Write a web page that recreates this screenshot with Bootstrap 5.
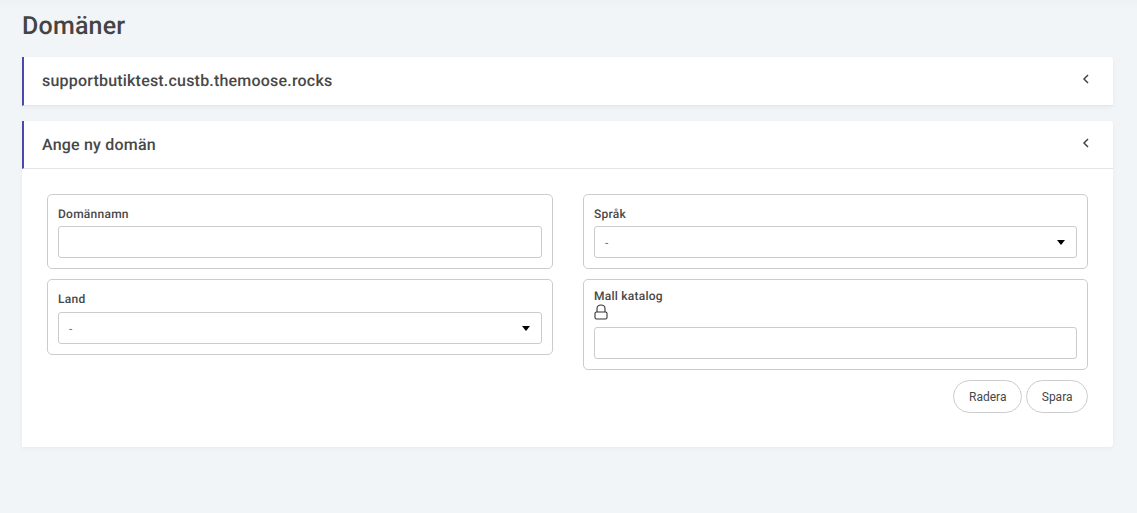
<!DOCTYPE html>
<html lang="sv">
<head>
<meta charset="utf-8">
<title>Domäner</title>
<link rel="stylesheet" href="https://cdn.jsdelivr.net/npm/bootstrap@5.3.0/dist/css/bootstrap.min.css">
<style>
html,body{height:100%}
body{background:#f2f5f8;font-family:Roboto,sans-serif;color:#333;overflow:hidden;text-rendering:geometricPrecision}
.page-wrap{padding:11px 24px 0 22px;background:linear-gradient(#eef1f4,#f2f5f8 8px) no-repeat top/100% 10px}
.page-title{font-size:25px;font-weight:500;line-height:32px;margin:0 0 14px;letter-spacing:.2px;color:#444}
.dom-card{border:0;border-radius:0 4px 4px 0;background:#fff;box-shadow:0 2px 5px rgba(0,0,0,.04);margin-bottom:15px}
.dom-head{display:flex;justify-content:space-between;align-items:flex-start;border-left:2px solid #4a4aa8;border-bottom:1px solid #e6e6e6;padding:14px 22px 14px 18px;font-size:16px;font-weight:500;line-height:20px;letter-spacing:.2px;height:49px;background:#fff;border-radius:0 4px 0 0;color:#484848}
.dom-head.second{height:48px}
.dom-head svg{margin-top:1px}
.dom-body{padding:25px 25px 34px}
.field-box{border:1px solid #ccc;border-radius:5px;padding:10px;margin-bottom:10px}
.field-label{display:block;font-size:12px;font-weight:500;line-height:18px;letter-spacing:.25px;margin-bottom:3px;color:#484848}
.field-label.tall{margin-bottom:4px}
.field-label.tight{margin:-3px 0 0}
.dom-input{display:block;width:100%;height:32px;border:1px solid #ccc;border-radius:3px;background:#fff;padding:1px 10px 0;font-size:12px;line-height:30px;color:#666}
.dom-select{display:flex;justify-content:space-between;align-items:center}
.caret-down{width:0;height:0;margin:-1px 1px 0 0;border-left:4.5px solid transparent;border-right:4.5px solid transparent;border-top:5px solid #000}
.lock-row{display:block;height:16px;margin:-1px 0 7px;line-height:0}
.pill-btn{border:1px solid #ccc;border-radius:17px;height:33px;background:#fff;font-size:12px;letter-spacing:0;color:#484848;padding:1px 14.500px 0;line-height:31px}
.pill-wide{min-width:69px}
.col-left{width:506px}
.col-right{width:505px}
.cols{display:flex;justify-content:space-between}
</style>
</head>
<body>
<div class="page-wrap">
  <h1 class="page-title">Domäner</h1>
  <div class="card dom-card">
    <div class="dom-head"><span>supportbutiktest.custb.themoose.rocks</span>
      <svg width="10" height="14" viewBox="0 0 10 14" fill="none" stroke="#444" stroke-width="1.5"><path d="M7 3 3 7l4 4"/></svg>
    </div>
  </div>
  <div class="card dom-card">
    <div class="dom-head second"><span>Ange ny domän</span>
      <svg width="10" height="14" viewBox="0 0 10 14" fill="none" stroke="#444" stroke-width="1.5"><path d="M7 3 3 7l4 4"/></svg>
    </div>
    <div class="dom-body">
      <div class="cols">
        <div class="col-left">
          <div class="field-box">
            <label class="field-label">Domännamn</label>
            <div class="dom-input"></div>
          </div>
          <div class="field-box">
            <label class="field-label tall">Land</label>
            <div class="dom-input dom-select"><span>-</span><span class="caret-down"></span></div>
          </div>
        </div>
        <div class="col-right">
          <div class="field-box">
            <label class="field-label">Språk</label>
            <div class="dom-input dom-select"><span>-</span><span class="caret-down"></span></div>
          </div>
          <div class="field-box">
            <label class="field-label tight">Mall katalog</label>
            <span class="lock-row"><svg width="14" height="16" viewBox="0 0 14 16" fill="none" stroke="#333" stroke-width="1.1"><rect x="1" y="8" width="12" height="7" rx="1.5"/><path d="M3 8V4.500a4 3.500 0 0 1 8 0V8"/></svg></span>
            <div class="dom-input"></div>
          </div>
          <div class="d-flex justify-content-end gap-1">
            <button type="button" class="pill-btn pill-wide">Radera</button>
            <button type="button" class="pill-btn">Spara</button>
          </div>
        </div>
      </div>
    </div>
  </div>
</div>
<script src="https://cdn.jsdelivr.net/npm/bootstrap@5.3.0/dist/js/bootstrap.bundle.min.js"></script>
</body>
</html>
